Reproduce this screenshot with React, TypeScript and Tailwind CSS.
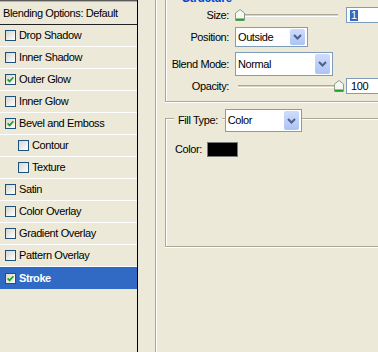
import React from "react";

interface Effect {
  label: string;
  checked?: boolean;
  indent?: boolean;
  selected?: boolean;
}

const effects: Effect[] = [
  { label: "Drop Shadow" },
  { label: "Inner Shadow" },
  { label: "Outer Glow", checked: true },
  { label: "Inner Glow" },
  { label: "Bevel and Emboss", checked: true },
  { label: "Contour", indent: true },
  { label: "Texture", indent: true },
  { label: "Satin" },
  { label: "Color Overlay" },
  { label: "Gradient Overlay" },
  { label: "Pattern Overlay" },
  { label: "Stroke", checked: true, selected: true },
];

const Checkbox = ({ checked }: { checked?: boolean }) => (
  <span className="w-[11px] h-[11px] shrink-0 border border-[#1c5180] bg-linear-to-br from-[#d6d6ce] to-white flex items-center justify-center">
    {checked && (
      <svg width="7" height="7" viewBox="0 0 7 7">
        <path d="M0.6 3.4 L2.6 5.4 L6.4 1.2" stroke="#21a121" strokeWidth="1.7" fill="none" />
      </svg>
    )}
  </span>
);

const Chevron = () => (
  <svg width="9" height="6" viewBox="0 0 9 6">
    <path d="M1 1 L4.5 4.5 L8 1" stroke="#4d6185" strokeWidth="2" fill="none" />
  </svg>
);

const Select = ({ value, className }: { value: string; className: string }) => (
  <div className={`bg-white border border-[#7f9db9] flex items-center justify-between pl-[2px] pr-[2px] py-[1px] ${className}`}>
    <span>{value}</span>
    <span className="w-[15px] h-full rounded-[2px] bg-linear-to-b from-[#cfdcfd] to-[#adc3f5] flex items-center justify-center">
      <Chevron />
    </span>
  </div>
);

const Thumb = () => (
  <svg width="10" height="12" viewBox="0 0 10 12">
    <path d="M0.5 4 L5 0.5 L9.5 4 L9.5 11.5 L0.5 11.5 Z" fill="#f7f7f4" stroke="#8d9b8a" />
    <path d="M1 10.5 L9 10.5" stroke="#21a121" strokeWidth="2" />
  </svg>
);

const Slider = ({ thumbLeft, trackLeft, trackRight }: { thumbLeft: number; trackLeft: string; trackRight: string }) => (
  <div className="w-[108px] h-full relative">
    <div className={`absolute top-[7px] h-[3px] border-t border-[#aca899] bg-[#d8d5c8] border-b border-b-white ${trackLeft} ${trackRight}`} />
    <div className="absolute top-[2px]" style={{ left: thumbLeft }}>
      <Thumb />
    </div>
  </div>
);

export default function App() {
  return (
    <div className="w-[378px] h-[352px] overflow-hidden bg-[#ece9d8] flex font-['Liberation_Sans',Arial,sans-serif] text-[11px] tracking-[-0.4px] text-black">
      {/* effects list */}
      <div className="w-[138px] h-full shrink-0 border-r border-black flex flex-col">
        <div className="h-[1px] bg-[#5a5a5a]" />
        <div className="h-[1px] bg-[#b5b2a5]" />
        <div className="h-[23px] border-b border-[#222] flex items-center pl-[3px]">Blending Options: Default</div>
        {effects.map((e) => (
          <div
            key={e.label}
            className={`h-[22px] flex items-center gap-[3px] ${e.indent ? "pl-[18px]" : "pl-[5px]"} ${
              e.selected ? "bg-[#316ac5] text-white font-bold" : "border-b border-white"
            }`}
          >
            <Checkbox checked={e.checked} />
            <span>{e.label}</span>
          </div>
        ))}
      </div>

      {/* options */}
      <div className="flex h-full">
        <div className="ml-[17px] w-[1px] h-full bg-[#aca899]" />
        <div className="w-[1px] h-full bg-white" />

        <div className="ml-[8px] w-[260px] flex flex-col">
          <div className="h-[102px] border-l border-b border-[#aca899] shadow-[inset_1px_0_0_#fff,0_1px_0_#fff] flex flex-col">
            <div className="h-[3px] pl-[16px]">
              <div className="-mt-[8px] leading-[13px] font-bold text-[12px] text-[#0046d5]">Structure</div>
            </div>

            <div className="mt-[4px] h-[16px] flex items-center">
              <span className="w-[63px] text-right">Size:</span>
              <div className="ml-[6px] h-full">
                <Slider thumbLeft={0} trackLeft="left-[1px]" trackRight="right-[5px]" />
              </div>
              <div className="ml-[3px] w-[60px] h-full bg-white border border-[#7f9db9] flex items-center pl-[3px]">
                <span className="bg-[#316ac5] text-white px-[1px] leading-[11px]">1</span>
              </div>
            </div>

            <div className="mt-[4px] h-[20px] flex items-center">
              <span className="w-[63px] text-right">Position:</span>
              <Select value="Outside" className="ml-[6px] w-[73px] h-full" />
            </div>

            <div className="mt-[5px] h-[24px] flex items-center">
              <span className="w-[63px] text-right">Blend Mode:</span>
              <Select value="Normal" className="ml-[6px] w-[98px] h-full" />
            </div>

            <div className="mt-[2px] h-[16px] flex items-center">
              <span className="w-[63px] text-right">Opacity:</span>
              <div className="ml-[6px] h-full">
                <Slider thumbLeft={99} trackLeft="left-[3px]" trackRight="right-[6px]" />
              </div>
              <div className="ml-[3px] w-[60px] h-full bg-white border border-[#7f9db9] flex items-center pl-[4px]">
                100
              </div>
            </div>
          </div>

          <div className="mt-[16px] h-[129px] border-l border-t border-b border-[#aca899] shadow-[inset_1px_1px_0_#fff,0_1px_0_#fff] flex flex-col">
            <div className="-mt-[10px] h-[23px] flex items-center pl-[8px]">
              <span className="bg-[#ece9d8] px-[4px]">Fill Type:</span>
              <Select value="Color" className="ml-[3px] w-[77px] h-full" />
            </div>
            <div className="mt-[10px] h-[15px] flex items-center pl-[9px]">
              <span>Color:</span>
              <span className="ml-[5px] w-[31px] h-[15px] bg-black border border-[#7a7a7a]" />
            </div>
          </div>
        </div>
      </div>
    </div>
  );
}
